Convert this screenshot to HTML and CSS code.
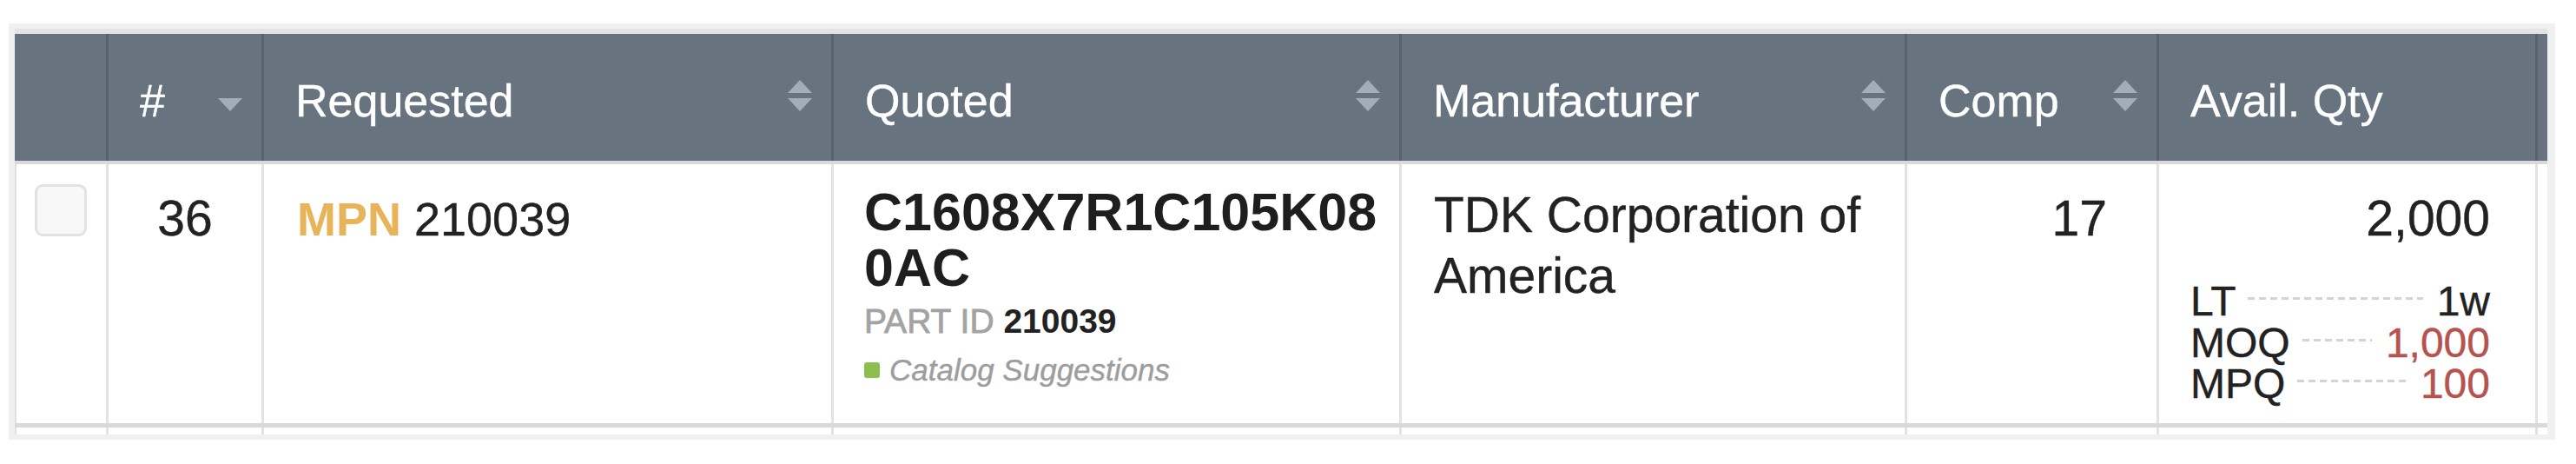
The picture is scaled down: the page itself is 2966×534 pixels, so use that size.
FILE: index.html
```html
<!DOCTYPE html>
<html lang="en">
<head>
<meta charset="utf-8">
<title>Quote lines</title>
<link rel="stylesheet" href="styles.css">
</head>
<body>
<div class="page">
  <div class="frame">
    <div class="table">
      <div class="thead grid">
        <div class="th"></div>
        <div class="th">
          <span class="th-label">#</span>
          <svg class="sort" viewBox="0 0 28 36" width="28" height="36"><path class="desc" d="M0 21 H28 L14 36 Z"/></svg>
        </div>
        <div class="th">
          <span class="th-label">Requested</span>
          <svg class="sort" viewBox="0 0 28 36" width="28" height="36"><path d="M14 0 L28 15 H0 Z"/><path d="M0 21 H28 L14 36 Z"/></svg>
        </div>
        <div class="th">
          <span class="th-label">Quoted</span>
          <svg class="sort" viewBox="0 0 28 36" width="28" height="36"><path d="M14 0 L28 15 H0 Z"/><path d="M0 21 H28 L14 36 Z"/></svg>
        </div>
        <div class="th">
          <span class="th-label">Manufacturer</span>
          <svg class="sort" viewBox="0 0 28 36" width="28" height="36"><path d="M14 0 L28 15 H0 Z"/><path d="M0 21 H28 L14 36 Z"/></svg>
        </div>
        <div class="th">
          <span class="th-label">Comp</span>
          <svg class="sort" viewBox="0 0 28 36" width="28" height="36"><path d="M14 0 L28 15 H0 Z"/><path d="M0 21 H28 L14 36 Z"/></svg>
        </div>
        <div class="th">
          <span class="th-label">Avail. Qty</span>
        </div>
        <div class="th th-end"></div>
      </div>

      <div class="row grid">
        <div class="td td-check"><span class="checkbox"></span></div>
        <div class="td td-num">36</div>
        <div class="td td-req"><span class="mpn">MPN</span> 210039</div>
        <div class="td td-quoted">
          <div class="part-no">C1608X7R1C105K08<br>0AC</div>
          <div class="part-id"><span class="part-id-label">PART ID</span> <span class="part-id-value">210039</span></div>
          <div class="source"><span class="source-dot"></span><span class="source-text">Catalog Suggestions</span></div>
        </div>
        <div class="td td-mfr">TDK Corporation of America</div>
        <div class="td td-comp">17</div>
        <div class="td td-avail">
          <div class="avail-qty">2,000</div>
          <div class="terms">
            <div class="term"><span class="term-key">LT</span><span class="leader"></span><span class="term-val">1w</span></div>
            <div class="term"><span class="term-key">MOQ</span><span class="leader"></span><span class="term-val warn">1,000</span></div>
            <div class="term"><span class="term-key">MPQ</span><span class="leader"></span><span class="term-val warn">100</span></div>
          </div>
        </div>
        <div class="td td-end"></div>
      </div>

      <div class="row-stub grid">
        <div class="td"></div><div class="td"></div><div class="td"></div><div class="td"></div>
        <div class="td"></div><div class="td"></div><div class="td"></div><div class="td td-end"></div>
      </div>
    </div>
  </div>
</div>
</body>
</html>
```

FILE: styles.css
```css
html, body {
  margin: 0;
  padding: 0;
  background: #ffffff;
}

body {
  font-family: "Liberation Sans", Arial, Helvetica, sans-serif;
  color: #222222;
}

.page {
  padding: 27px 0 0 10px;
}

.frame {
  display: inline-block;
  background: #f0f0f0;
  padding: 6px 9px 6px 7px;
}

.table {
  width: 2916px;
  border-top: 6px solid #e4e4e4;
  background: #ffffff;
  overflow: hidden;
}

.grid {
  display: grid;
  grid-template-columns: 108px 179px 656px 654px 582px 290px 436px 11px;
}

/* ---------- header ---------- */
.thead {
  background: #67737f;
  border-bottom: 4px solid #d6d9dd;
}

.th {
  height: 146px;
  box-sizing: border-box;
  border-right: 3px solid #57626d;
  padding: 0 22px 0 36px;
  display: flex;
  align-items: center;
  color: #ffffff;
}

.th-end {
  border-right: none;
}

.th-label {
  font-size: 52px;
  line-height: 58px;
  padding-top: 7px;
  white-space: nowrap;
  -webkit-text-stroke: 0.4px #ffffff;
}

.sort {
  margin-left: auto;
  margin-bottom: 4px;
  flex: none;
  fill: #a3adb7;
}

/* ---------- body row ---------- */
.row {
  height: 303px;
  box-sizing: border-box;
  border-bottom: 5px solid #d9d9d9;
}

.td {
  box-sizing: border-box;
  border-right: 3px solid #e2e2e2;
  min-width: 0;
  -webkit-text-stroke: 0.4px currentColor;
}

.td-end {
  border-right: none;
}

.row .td:first-child,
.row-stub .td:first-child {
  box-shadow: inset 2px 0 0 #e2e2e2;
}

.td-check {
  padding: 23px 0 0 23px;
}

.checkbox {
  display: block;
  width: 60px;
  height: 60px;
  box-sizing: border-box;
  border: 3px solid #e2e2e2;
  border-radius: 9px;
  background: #f8f8f8;
}

.td-num {
  padding-top: 27px;
  font-size: 57px;
  line-height: 70px;
  text-align: center;
}

.td-req {
  padding: 28px 20px 0 38px;
  font-size: 54px;
  line-height: 70px;
  white-space: nowrap;
}

.mpn {
  color: #e7b45a;
  font-weight: bold;
  -webkit-text-stroke: 0;
}

.td-quoted {
  padding: 23px 20px 0 35px;
}

.part-no {
  font-size: 61px;
  line-height: 64px;
  font-weight: bold;
  white-space: nowrap;
  color: #1e1e1e;
  -webkit-text-stroke: 0;
}

.part-id {
  margin-top: 7px;
  font-size: 39px;
  line-height: 46px;
  white-space: nowrap;
}

.part-id-label {
  color: #a3a3a3;
  -webkit-text-stroke: 0.8px #a3a3a3;
}

.part-id-value {
  font-weight: bold;
  color: #222222;
  -webkit-text-stroke: 0;
}

.source {
  margin-top: 11px;
  display: flex;
  align-items: center;
  font-size: 35px;
  line-height: 44px;
}

.source-dot {
  width: 18px;
  height: 18px;
  border-radius: 3px;
  background: #8cbf4e;
  margin-right: 11px;
  flex: none;
}

.source-text {
  font-style: italic;
  color: #9d9d9d;
  white-space: nowrap;
}

.td-mfr {
  padding: 23px 36px 0 37px;
  font-size: 57px;
  line-height: 70px;
}

.td-comp {
  padding: 27px 57px 0 0;
  font-size: 57px;
  line-height: 70px;
  text-align: right;
}

.td-avail {
  padding: 27px 52px 0 36px;
}

.avail-qty {
  font-size: 57px;
  line-height: 70px;
  text-align: right;
}

.terms {
  margin-top: 37px;
  font-size: 48px;
  line-height: 47.5px;
}

.term {
  display: flex;
  align-items: center;
  white-space: nowrap;
}

.leader {
  flex: 1;
  height: 3px;
  margin: 0 16px 6px 14px;
  background: repeating-linear-gradient(90deg, #d4d4d4 0 8px, transparent 8px 13px);
}

.term-val {
  color: #222222;
}

.term-val.warn {
  color: #b5534f;
}

/* ---------- next row stub ---------- */
.row-stub {
  height: 8px;
}
```
